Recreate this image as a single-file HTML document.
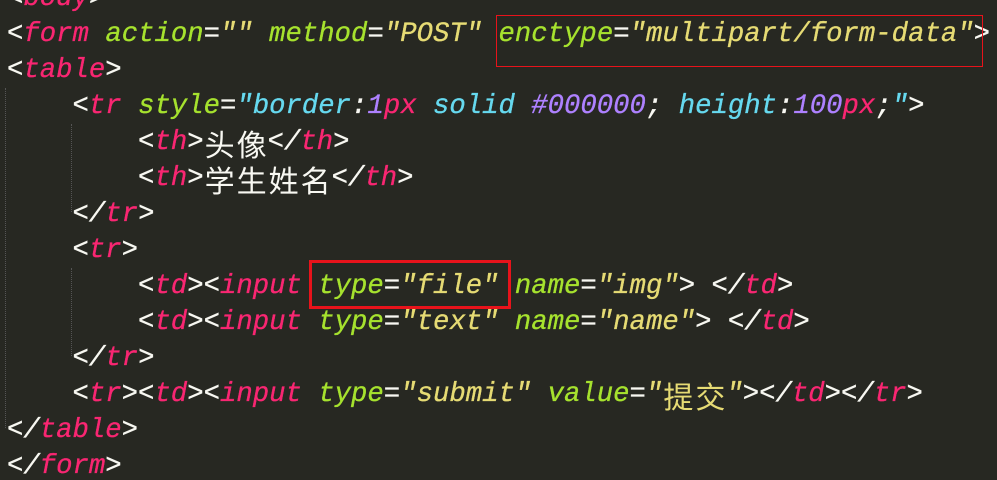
<!DOCTYPE html>
<html><head><meta charset="utf-8"><style>
html,body{margin:0;padding:0;background:#272822;width:997px;height:480px;overflow:hidden;position:relative}
pre{margin:0;position:absolute;left:7px;top:-19px;font-family:"Liberation Mono",monospace;font-style:italic;font-size:27.3px;line-height:36px;color:#f8f8f2;white-space:pre;-webkit-text-stroke:0.3px currentColor}
.t{color:#f92672}.a{color:#a6e22e}.s{color:#e6db74}.c{color:#66d9ef}.n{color:#ae81ff}
.z{font-family:"Noto Sans CJK SC",sans-serif;font-style:normal;font-size:30px;display:inline-block;width:32px;text-align:center;line-height:36px;vertical-align:top;-webkit-text-stroke:0}
.g{position:absolute;width:0;border-left:1px dotted #555}
.box{position:absolute;border:1px solid #e8131b}
</style></head><body>
<div class="g" style="left:5px;top:88px;height:340px"></div>
<div class="g" style="left:71px;top:124px;height:88px"></div>
<div class="g" style="left:71px;top:268px;height:88px"></div>
<pre>&lt;<span class="t">body</span>&gt;
&lt;<span class="t">form</span> <span class="a">action</span>=<span class="s">""</span> <span class="a">method</span>=<span class="s">"POST"</span> <span class="a">enctype</span>=<span class="s">"multipart/form-data"</span>&gt;
&lt;<span class="t">table</span>&gt;
    &lt;<span class="t">tr</span> <span class="a">style</span>=<span class="c">"border</span>:<span class="n">1</span><span class="t">px</span> <span class="c">solid</span> <span class="n">#000000</span>; <span class="c">height</span>:<span class="n">100</span><span class="t">px</span>;<span class="c">"</span>&gt;
        &lt;<span class="t">th</span>&gt;<span class="z">头</span><span class="z">像</span>&lt;/<span class="t">th</span>&gt;
        &lt;<span class="t">th</span>&gt;<span class="z">学</span><span class="z">生</span><span class="z">姓</span><span class="z">名</span>&lt;/<span class="t">th</span>&gt;
    &lt;/<span class="t">tr</span>&gt;
    &lt;<span class="t">tr</span>&gt;
        &lt;<span class="t">td</span>&gt;&lt;<span class="t">input</span> <span class="a">type</span>=<span class="s">"file"</span> <span class="a">name</span>=<span class="s">"img"</span>&gt; &lt;/<span class="t">td</span>&gt;
        &lt;<span class="t">td</span>&gt;&lt;<span class="t">input</span> <span class="a">type</span>=<span class="s">"text"</span> <span class="a">name</span>=<span class="s">"name"</span>&gt; &lt;/<span class="t">td</span>&gt;
    &lt;/<span class="t">tr</span>&gt;
    &lt;<span class="t">tr</span>&gt;&lt;<span class="t">td</span>&gt;&lt;<span class="t">input</span> <span class="a">type</span>=<span class="s">"submit"</span> <span class="a">value</span>=<span class="s">"<span class="z">提</span><span class="z">交</span>"</span>&gt;&lt;/<span class="t">td</span>&gt;&lt;/<span class="t">tr</span>&gt;
&lt;/<span class="t">table</span>&gt;
&lt;/<span class="t">form</span>&gt;</pre>
<div class="box" style="left:496px;top:15px;width:485px;height:50px"></div>
<div class="box" style="left:309px;top:260px;width:196px;height:43px;border-width:3px"></div>
</body></html>
